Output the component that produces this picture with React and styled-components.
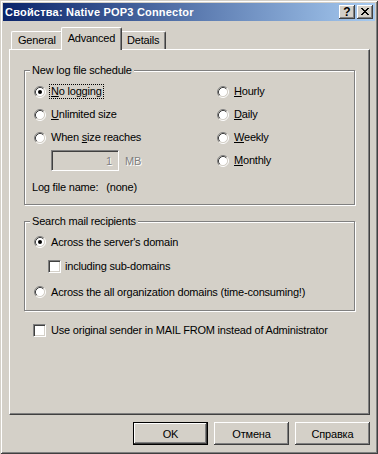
import React from 'react';
import styled, { createGlobalStyle } from 'styled-components';

const Global = createGlobalStyle`
  html, body { margin: 0; padding: 0; background: #d4d0c8; }
  body {
    font-family: "Liberation Sans", Arial, sans-serif;
    font-size: 11px;
    letter-spacing: -0.2px;
    color: #000;
  }
`;

const Window = styled.div`
  width: 378px;
  height: 454px;
  box-sizing: border-box;
  background: #d4d0c8;
  box-shadow: inset 1px 1px #d4d0c8, inset -1px -1px #404040, inset 2px 2px #fff, inset -2px -2px #808080;
  padding: 3px;
  display: flex;
  flex-direction: column;
`;

const TitleBar = styled.div`
  height: 18px;
  display: flex;
  align-items: center;
  padding: 0 2px;
  background: linear-gradient(to right, #0a246a, #a6caf0);
`;

const TitleText = styled.div`
  flex: 1;
  color: #fff;
  font-weight: bold;
  font-size: 11px;
  letter-spacing: 0.2px;
  white-space: nowrap;
`;

const CaptionButtons = styled.div`
  display: flex;
  gap: 2px;
`;

const CaptionButton = styled.div`
  width: 16px;
  height: 14px;
  box-sizing: border-box;
  background: #d4d0c8;
  box-shadow: inset -1px -1px #404040, inset 1px 1px #fff, inset -2px -2px #808080;
  display: flex;
  align-items: center;
  justify-content: center;
  font-weight: bold;
  font-size: 12px;
  letter-spacing: 0;
  line-height: 1;
  padding-bottom: 1px;
`;

const CloseGlyph = styled.svg`
  display: block;
  shape-rendering: crispEdges;
`;

const Body = styled.div`
  flex: 1;
  display: flex;
  flex-direction: column;
  padding: 6px 5px 0 6px;
`;

const TabRow = styled.div`
  display: flex;
  align-items: flex-end;
  height: 22px;
  padding-left: 2px;
  position: relative;
  z-index: 1;
`;

const Tab = styled.div`
  box-sizing: border-box;
  height: ${p => (p.$active ? '23px' : '18px')};
  margin: ${p => (p.$active ? '0 -2px -1px' : '0')};
  padding: ${p => (p.$active ? '4px 6px 0' : '2px 6px 0')};
  line-height: 13px;
  background: #d4d0c8;
  border-top: 1px solid #fff;
  border-left: 1px solid #fff;
  border-right: 1px solid #404040;
  box-shadow: inset -1px 0 #808080;
  border-radius: 2px 2px 0 0;
  position: relative;
  z-index: ${p => (p.$active ? 2 : 1)};
  white-space: nowrap;
`;

const Panel = styled.div`
  box-sizing: border-box;
  height: 366px;
  background: #d4d0c8;
  border-top: 1px solid #fff;
  border-left: 1px solid #fff;
  border-right: 1px solid #404040;
  border-bottom: 1px solid #404040;
  box-shadow: inset -1px -1px #808080;
  padding: 20px 14px 0 14px;
  display: flex;
  flex-direction: column;
`;

const Group = styled.div`
  border: 1px solid #808080;
  box-shadow: inset 1px 1px #fff, 1px 1px #fff;
  padding: 0 9px ${p => p.$bottom || '10px'} 9px;
  margin-top: ${p => p.$top || '0'};
`;

const GroupTitle = styled.div`
  display: table;
  margin: -7px 0 0 -4px;
  padding: 0 2px;
  background: #d4d0c8;
  line-height: 13px;
`;

const ScheduleGrid = styled.div`
  display: grid;
  grid-template-columns: 183px 1fr;
  grid-template-rows: repeat(4, 23px);
  grid-auto-flow: column;
  margin-top: 3px;
`;

const Option = styled.div`
  display: flex;
  align-items: center;
  gap: ${p => p.$gap || '5px'};
  height: ${p => p.$h || '23px'};
  margin-top: ${p => p.$mt || '0'};
  margin-left: ${p => p.$ml || '0'};
  line-height: 13px;
  white-space: nowrap;
`;

const Label = styled.span`
  line-height: 13px;
`;

const FocusLabel = styled.span`
  line-height: 11px;
  margin: 0 -2px;
  padding: 1px 1px;
  border: 1px dotted #000;
`;

const RadioSvg = styled.svg`
  display: block;
  flex-shrink: 0;
`;

const Radio = ({ checked }) => (
  <RadioSvg width="12" height="12" viewBox="0 0 12 12">
    <circle cx="6" cy="6" r="4.5" fill="#fff" />
    <path d="M2.11 9.89 A5.5 5.5 0 0 1 9.89 2.11" stroke="#808080" fill="none" />
    <path d="M9.89 2.11 A5.5 5.5 0 0 1 2.11 9.89" stroke="#fff" fill="none" />
    <path d="M2.82 9.18 A4.5 4.5 0 0 1 9.18 2.82" stroke="#404040" fill="none" />
    <path d="M9.18 2.82 A4.5 4.5 0 0 1 2.82 9.18" stroke="#d4d0c8" fill="none" />
    {checked && <circle cx="6" cy="6" r="2" fill="#000" />}
  </RadioSvg>
);

const CheckBox = styled.span`
  width: 13px;
  height: 13px;
  box-sizing: border-box;
  flex-shrink: 0;
  background: #fff;
  border: 1px solid;
  border-color: #808080 #fff #fff #808080;
  box-shadow: inset 1px 1px #404040, inset -1px -1px #d4d0c8;
`;

const SizeRow = styled.div`
  display: flex;
  align-items: center;
  gap: 6px;
  padding-left: 17px;
  height: 23px;
`;

const SizeField = styled.div`
  width: 68px;
  height: 21px;
  box-sizing: border-box;
  border: 1px solid;
  border-color: #808080 #fff #fff #808080;
  box-shadow: inset 1px 1px #404040, inset -1px -1px #d4d0c8;
  display: flex;
  align-items: center;
  justify-content: flex-end;
  padding-right: 6px;
  color: #808080;
  text-shadow: 1px 1px #fff;
`;

const Disabled = styled.span`
  color: #808080;
  text-shadow: 1px 1px #fff;
`;

const LogName = styled.div`
  display: flex;
  gap: 8px;
  margin: 9px 0 0 -2px;
  line-height: 13px;
`;

const ButtonRow = styled.div`
  display: flex;
  justify-content: flex-end;
  gap: 6px;
  margin-top: 7px;
`;

const Button = styled.button`
  width: 75px;
  height: 23px;
  box-sizing: border-box;
  padding: 0;
  font: inherit;
  letter-spacing: inherit;
  color: #000;
  background: #d4d0c8;
  border: ${p => (p.$default ? '1px solid #000' : 'none')};
  box-shadow: inset -1px -1px #404040, inset 1px 1px #fff, inset -2px -2px #808080;
`;

export default function App() {
  return (
    <>
      <Global />
      <Window>
        <TitleBar>
          <TitleText>Свойства: Native POP3 Connector</TitleText>
          <CaptionButtons>
            <CaptionButton>?</CaptionButton>
            <CaptionButton>
              <CloseGlyph width="8" height="7" viewBox="0 0 8 7">
                <path
                  fill="#000"
                  d="M0 0h2v1H0zM6 0h2v1H6zM1 1h2v1H1zM5 1h2v1H5zM2 2h4v1H2zM3 3h2v1H3zM2 4h4v1H2zM1 5h2v1H1zM5 5h2v1H5zM0 6h2v1H0zM6 6h2v1H6z"
                />
              </CloseGlyph>
            </CaptionButton>
          </CaptionButtons>
        </TitleBar>
        <Body>
          <TabRow>
            <Tab>General</Tab>
            <Tab $active>Advanced</Tab>
            <Tab>Details</Tab>
          </TabRow>
          <Panel>
            <Group>
              <GroupTitle>New log file schedule</GroupTitle>
              <ScheduleGrid>
                <Option>
                  <Radio checked />
                  <FocusLabel><u>N</u>o logging</FocusLabel>
                </Option>
                <Option>
                  <Radio />
                  <Label><u>U</u>nlimited size</Label>
                </Option>
                <Option>
                  <Radio />
                  <Label>When <u>s</u>ize reaches</Label>
                </Option>
                <SizeRow>
                  <SizeField>1</SizeField>
                  <Disabled>MB</Disabled>
                </SizeRow>
                <Option>
                  <Radio />
                  <Label><u>H</u>ourly</Label>
                </Option>
                <Option>
                  <Radio />
                  <Label><u>D</u>aily</Label>
                </Option>
                <Option>
                  <Radio />
                  <Label><u>W</u>eekly</Label>
                </Option>
                <Option>
                  <Radio />
                  <Label><u>M</u>onthly</Label>
                </Option>
              </ScheduleGrid>
              <LogName>
                <span>Log file name:</span>
                <span>(none)</span>
              </LogName>
            </Group>
            <Group $top="16px" $bottom="7px">
              <GroupTitle>Search mail recipients</GroupTitle>
              <Option $h="22px" $mt="3px">
                <Radio checked />
                <Label>Across the server's domain</Label>
              </Option>
              <Option $h="22px" $mt="2px" $ml="14px" $gap="4px">
                <CheckBox />
                <Label>including sub-domains</Label>
              </Option>
              <Option $h="22px" $mt="4px">
                <Radio />
                <Label>Across the all organization domains (time-consuming!)</Label>
              </Option>
            </Group>
            <Option $h="22px" $mt="8px" $ml="9px" $gap="5px">
              <CheckBox />
              <Label>Use original sender in MAIL FROM instead of Administrator</Label>
            </Option>
          </Panel>
          <ButtonRow>
            <Button $default>OK</Button>
            <Button>Отмена</Button>
            <Button>Справка</Button>
          </ButtonRow>
        </Body>
      </Window>
    </>
  );
}
